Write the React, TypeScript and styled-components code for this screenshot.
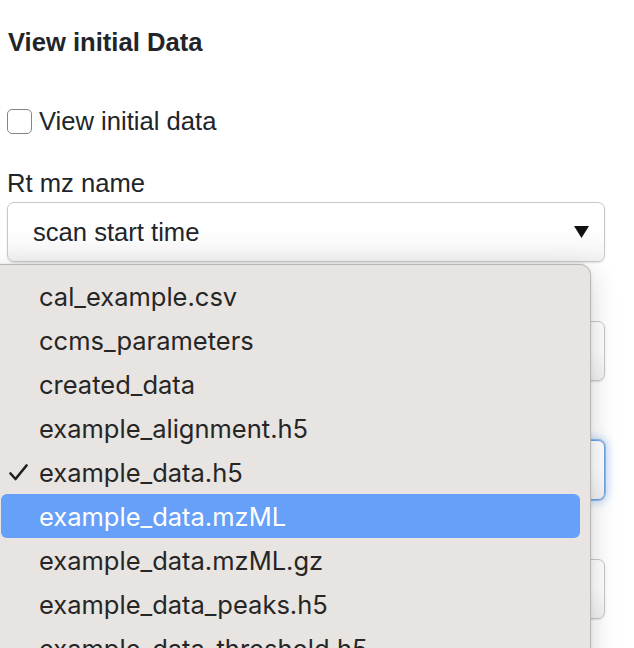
import React from "react";
import styled, { createGlobalStyle } from "styled-components";

const Global = createGlobalStyle`
  html, body {
    margin: 0;
    padding: 0;
    background: #ffffff;
    overflow: hidden;
  }
  body {
    font-family: "Liberation Sans", Arial, Helvetica, sans-serif;
    color: #212529;
  }
`;

const Page = styled.div`
  position: relative;
  width: 598px;
  height: 648px;
  padding: 27px 29px 0 7px;
  overflow: hidden;
`;

const Heading = styled.h4`
  margin: 0 0 49px 1px;
  font-size: 25.6px;
  line-height: 30px;
  font-weight: 700;
  color: #212529;
`;

const CheckRow = styled.label`
  display: flex;
  align-items: center;
  gap: 7px;
  height: 30px;
  margin-bottom: 32px;
  font-size: 25.6px;
  color: #212529;
`;

const Box = styled.span`
  box-sizing: border-box;
  width: 25px;
  height: 25px;
  border: 1.5px solid #858585;
  border-radius: 5px;
  background: #fff;
  flex: none;
`;

const Group = styled.div`
  display: flex;
  flex-direction: column;
  margin-bottom: 25px;
`;

const Label = styled.div`
  font-size: 25.6px;
  line-height: 30px;
  margin-bottom: 4px;
  color: #212529;
`;

const Select = styled.div<{ $focus?: boolean }>`
  box-sizing: border-box;
  height: 60px;
  display: flex;
  align-items: center;
  justify-content: space-between;
  padding: 0 15px 0 25px;
  border: 1px solid ${(p) => (p.$focus ? "#6fa3e6" : "#c8c8c8")};
  border-radius: 7px;
  background: linear-gradient(#ffffff 45%, #f2f2f2);
  box-shadow: ${(p) =>
    p.$focus
      ? "0 0 0 1px #8db8ef, 0 0 8px 3px rgba(90,150,230,0.35)"
      : "0 1px 2px rgba(0,0,0,0.12)"};
  font-size: 25.6px;
  color: #212529;
`;

const Arrow = styled.svg`
  width: 15px;
  height: 12px;
  flex: none;
`;

const Menu = styled.div`
  position: absolute;
  top: 264px;
  left: -10px;
  width: 601px;
  height: 520px;
  box-sizing: border-box;
  padding: 9px 10px;
  background: #e8e4e1;
  border: 1px solid #b9b7b5;
  border-radius: 11px;
  box-shadow: 0 8px 28px rgba(0, 0, 0, 0.18), 0 0 3px rgba(0, 0, 0, 0.1);
  font-family: Inter, "Noto Sans", sans-serif;
`;

const Item = styled.div<{ $active?: boolean }>`
  position: relative;
  height: 44px;
  display: flex;
  align-items: center;
  padding-left: 38px;
  border-radius: 6px;
  font-size: 25.5px;
  color: ${(p) => (p.$active ? "#ffffff" : "#262626")};
  background: ${(p) => (p.$active ? "#66a0f8" : "transparent")};
  white-space: nowrap;
`;

const Check = styled.svg`
  position: absolute;
  left: 8px;
  top: 14px;
  width: 19px;
  height: 17px;
`;

const files = [
  "cal_example.csv",
  "ccms_parameters",
  "created_data",
  "example_alignment.h5",
  "example_data.h5",
  "example_data.mzML",
  "example_data.mzML.gz",
  "example_data_peaks.h5",
  "example_data_threshold.h5",
  "example_data_threshold.mzML",
];

const DownArrow = () => (
  <Arrow viewBox="0 0 15 12">
    <path d="M0 0 H15 L7.5 12 Z" fill="#111" />
  </Arrow>
);

export default function App() {
  return (
    <>
      <Global />
      <Page>
        <Heading>View initial Data</Heading>
        <CheckRow>
          <Box />
          View initial data
        </CheckRow>
        <Group>
          <Label>Rt mz name</Label>
          <Select>
            scan start time
            <DownArrow />
          </Select>
        </Group>
        <Group>
          <Label>Intensity name</Label>
          <Select>
            intensity array
            <DownArrow />
          </Select>
        </Group>
        <Group>
          <Label>File</Label>
          <Select $focus>
            example_data.h5
            <DownArrow />
          </Select>
        </Group>
        <Group>
          <Label>Mode</Label>
          <Select>
            positive
            <DownArrow />
          </Select>
        </Group>
        <Menu>
          {files.map((f) => (
            <Item key={f} $active={f === "example_data.mzML"}>
              {f === "example_data.h5" && (
                <Check viewBox="0 0 19 17">
                  <path
                    d="M1.5 9.5 L6.5 15 L17.5 1.5"
                    fill="none"
                    stroke="#1f1f1f"
                    strokeWidth="2.6"
                    strokeLinecap="round"
                    strokeLinejoin="round"
                  />
                </Check>
              )}
              {f}
            </Item>
          ))}
        </Menu>
      </Page>
    </>
  );
}
